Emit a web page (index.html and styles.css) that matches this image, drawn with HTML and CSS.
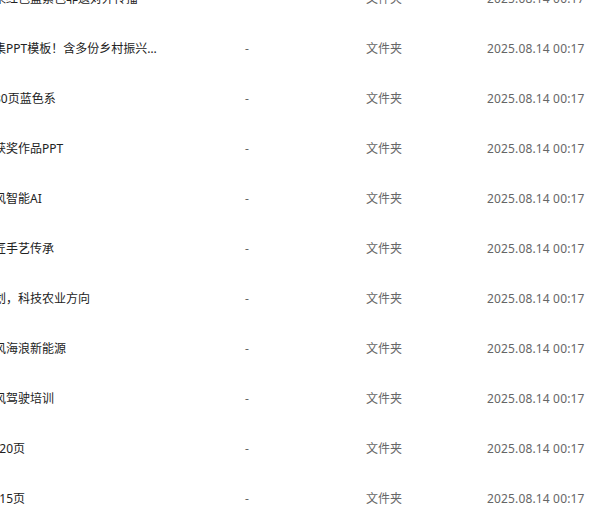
FILE: index.html
```html
<!DOCTYPE html>
<html lang="zh-CN">
<head>
    <meta charset="UTF-8">
    <meta name="viewport" content="width=device-width, initial-scale=1.0">
    <title>文件列表</title>
    <link rel="stylesheet" href="styles.css">
</head>
<body>
    <div class="file-list">
        <div class="file-row">
            <div class="file-name"><span>传承非遗文化的未来红色蓝紫色非遗对外传播</span></div>
            <div class="file-size">-</div>
            <div class="file-type">文件夹</div>
            <div class="file-time">2025.08.14 00:17</div>
        </div>
        <div class="file-row">
            <div class="file-name"><span>乡村振兴党建宣讲集PPT模板！含多份乡村振兴资料</span></div>
            <div class="file-size">-</div>
            <div class="file-type">文件夹</div>
            <div class="file-time">2025.08.14 00:17</div>
        </div>
        <div class="file-row">
            <div class="file-name"><span>年终工作总结模板30页蓝色系</span></div>
            <div class="file-size">-</div>
            <div class="file-type">文件夹</div>
            <div class="file-time">2025.08.14 00:17</div>
        </div>
        <div class="file-row">
            <div class="file-name"><span>青年创新设计大赛获奖作品PPT</span></div>
            <div class="file-size">-</div>
            <div class="file-type">文件夹</div>
            <div class="file-time">2025.08.14 00:17</div>
        </div>
        <div class="file-row">
            <div class="file-name"><span>蓝色炫酷未来科技风智能AI</span></div>
            <div class="file-size">-</div>
            <div class="file-type">文件夹</div>
            <div class="file-time">2025.08.14 00:17</div>
        </div>
        <div class="file-row">
            <div class="file-name"><span>中国风非遗文化工匠手艺传承</span></div>
            <div class="file-size">-</div>
            <div class="file-type">文件夹</div>
            <div class="file-time">2025.08.14 00:17</div>
        </div>
        <div class="file-row">
            <div class="file-name"><span>乡村振兴产业园规划，科技农业方向</span></div>
            <div class="file-size">-</div>
            <div class="file-type">文件夹</div>
            <div class="file-time">2025.08.14 00:17</div>
        </div>
        <div class="file-row">
            <div class="file-name"><span>蓝色大气商务科技风海浪新能源</span></div>
            <div class="file-size">-</div>
            <div class="file-type">文件夹</div>
            <div class="file-time">2025.08.14 00:17</div>
        </div>
        <div class="file-row">
            <div class="file-name"><span>汽车安全简约商务风驾驶培训</span></div>
            <div class="file-size">-</div>
            <div class="file-type">文件夹</div>
            <div class="file-time">2025.08.14 00:17</div>
        </div>
        <div class="file-row">
            <div class="file-name"><span>述职报告汇报模板_20页</span></div>
            <div class="file-size">-</div>
            <div class="file-type">文件夹</div>
            <div class="file-time">2025.08.14 00:17</div>
        </div>
        <div class="file-row">
            <div class="file-name"><span>工作计划汇报模板_15页</span></div>
            <div class="file-size">-</div>
            <div class="file-type">文件夹</div>
            <div class="file-time">2025.08.14 00:17</div>
        </div>
    </div>
</body>
</html>
```

FILE: styles.css
```css
body {
    margin: 0;
    font-family: "Noto Sans", "Noto Sans CJK SC", sans-serif;
    font-size: 12px;
    color: #666;
    background: #fff;
    overflow: hidden;
}

/* list is scrolled: first row and the start of the names are off screen */
.file-list {
    margin: -27px 0 0 -102px;
}

.file-row {
    display: grid;
    grid-template-columns: 347px 121px 121px 1fr;
    height: 50px;
    align-items: center;
}

.file-name span {
    display: block;
    max-width: 259px;
    white-space: nowrap;
    overflow: hidden;
    text-overflow: ellipsis;
    color: #222;
}

.file-time {
    white-space: nowrap;
    letter-spacing: 0.15px;
}
```
